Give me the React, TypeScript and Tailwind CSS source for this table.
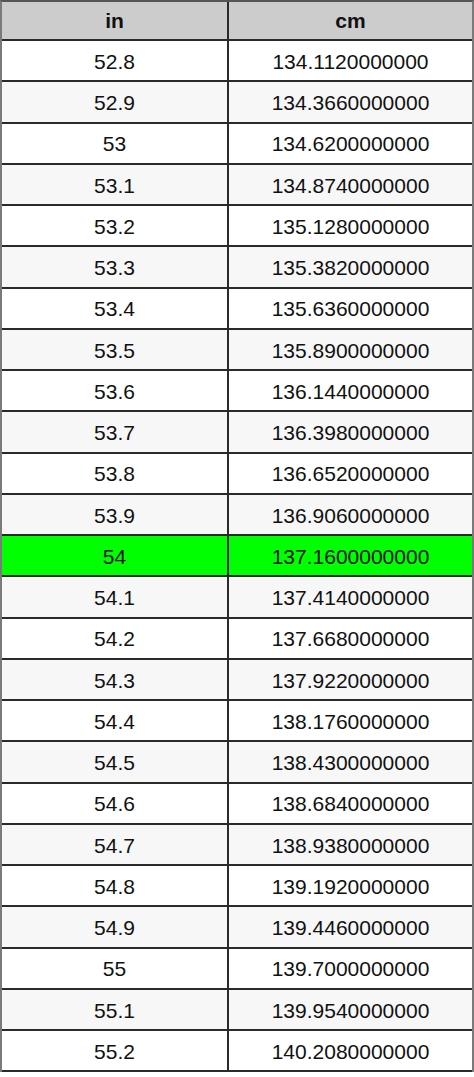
const rows: [string, string][] = [
  ["52.8", "134.1120000000"],
  ["52.9", "134.3660000000"],
  ["53", "134.6200000000"],
  ["53.1", "134.8740000000"],
  ["53.2", "135.1280000000"],
  ["53.3", "135.3820000000"],
  ["53.4", "135.6360000000"],
  ["53.5", "135.8900000000"],
  ["53.6", "136.1440000000"],
  ["53.7", "136.3980000000"],
  ["53.8", "136.6520000000"],
  ["53.9", "136.9060000000"],
  ["54", "137.1600000000"],
  ["54.1", "137.4140000000"],
  ["54.2", "137.6680000000"],
  ["54.3", "137.9220000000"],
  ["54.4", "138.1760000000"],
  ["54.5", "138.4300000000"],
  ["54.6", "138.6840000000"],
  ["54.7", "138.9380000000"],
  ["54.8", "139.1920000000"],
  ["54.9", "139.4460000000"],
  ["55", "139.7000000000"],
  ["55.1", "139.9540000000"],
  ["55.2", "140.2080000000"],
];

function rowBg(i: number, value: string) {
  if (value === "54") return "bg-[#00ff00]";
  return i % 2 === 0 ? "bg-white" : "bg-[#f7f7f7]";
}

export default function App() {
  return (
    <div className="h-[1077px] w-[474px] bg-white font-['Liberation_Sans',Arial,sans-serif] text-[21px] text-[#111]">
      <div className="border-x-2 border-t-2 border-x-[#7a7a7a] border-t-[#555]">
        <div className="flex h-[39px] border-b-2 border-[#2a2a2a] bg-[#cccccc] font-bold">
          <div className="flex w-[227px] items-center justify-center border-r-2 border-[#2a2a2a]">in</div>
          <div className="flex flex-1 items-center justify-center">cm</div>
        </div>
        {rows.map(([inch, cm], i) => (
          <div key={inch} className={`flex h-[41.25px] border-b-2 border-[#2a2a2a] ${rowBg(i, inch)}`}>
            <div className="flex w-[227px] items-center justify-center border-r-2 border-[#2a2a2a] pt-[2px]">{inch}</div>
            <div className="flex flex-1 items-center justify-center pt-[2px]">{cm}</div>
          </div>
        ))}
      </div>
    </div>
  );
}
